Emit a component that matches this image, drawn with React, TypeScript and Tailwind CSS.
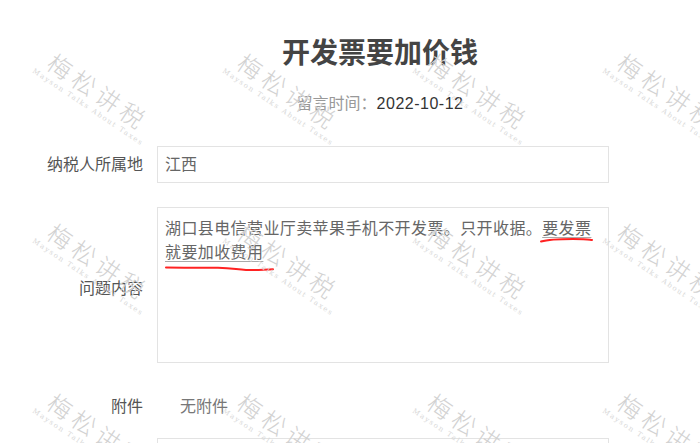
import React from "react";

const marks = [
  [95, 97], [285, 97], [475, 97], [665, 97],
  [95, 267], [285, 267], [475, 267], [665, 267],
  [95, 437], [285, 437], [475, 437], [665, 437],
];

function Watermark({ x, y }: { x: number; y: number }) {
  return (
    <div
      className="absolute pointer-events-none w-[160px] -translate-x-1/2 -translate-y-1/2 rotate-[34deg] flex flex-col items-center leading-none"
      style={{ left: x, top: y }}
    >
      <span className="text-[24px] tracking-[5px] text-[#d2d2d2] font-light">梅松讲税</span>
      <span className="mt-[2px] text-[7px] tracking-[1.6px] text-[#d8d8d8] font-['DejaVu_Serif',serif]">
        Mayson Talks About Taxes
      </span>
    </div>
  );
}

export default function App() {
  return (
    <div className="relative w-[700px] h-[443px] overflow-hidden bg-white font-['Liberation_Sans','Noto_Sans_CJK_SC',sans-serif]">
      <div className="pt-[37px]">
        <div className="ml-[154px] w-[452px] text-center">
          <h1 className="text-[28px] leading-[34px] font-bold text-[#444]">开发票要加价钱</h1>
          <p className="mt-[23px] text-[16px] leading-[20px] text-[#999]">
            留言时间：<span className="text-[#333] tracking-[0.5px]">2022-10-12</span>
          </p>
        </div>

        <div className="mt-[32px] flex flex-col gap-[24px] text-[16px]">
          <div className="flex items-center">
            <label className="w-[143px] text-right text-[#555]">纳税人所属地</label>
            <div className="ml-[14px] w-[452px] h-[37px] border border-[#e3e3e3] px-[7px] flex items-center text-[#666]">
              江西
            </div>
          </div>

          <div className="flex items-center">
            <label className="w-[143px] pt-[8px] text-right text-[#555]">问题内容</label>
            <div className="relative ml-[14px] w-[452px] h-[156px] border border-[#e3e3e3] pl-[7px] pr-[6px] pt-[9px] text-[#666] leading-[24px] tracking-[0.4px]">
              湖口县电信营业厅卖苹果手机不开发票。只开收据。
              <span className="underline decoration-[#aaa] underline-offset-[3px]">要发票</span>
              <br />
              <span className="underline decoration-[#aaa] underline-offset-[3px]">就要加收费用</span>
              <svg className="absolute left-0 top-0 pointer-events-none" width="452" height="80" fill="none">
                <path d="M383 33.5 C390 31.5 400 31 415 31 S430 31.5 434 32" stroke="#f22" strokeWidth="2" strokeLinecap="round" />
                <path d="M8 59.5 C25 59.8 45 59.5 60 59.8 S78 61.5 88 62 S105 61.5 115 61.2" stroke="#f22" strokeWidth="2" strokeLinecap="round" />
              </svg>
            </div>
          </div>

          <div className="flex items-center h-[37px] mt-[1px]">
            <label className="w-[143px] text-right text-[#555]">附件</label>
            <span className="ml-[37px] text-[#777]">无附件</span>
          </div>

          <div className="ml-[157px] -mt-[11px] w-[452px] h-[40px] border border-[#e3e3e3]" />
        </div>
      </div>

      {marks.map(([x, y], i) => (
        <Watermark key={i} x={x} y={y} />
      ))}
    </div>
  );
}
